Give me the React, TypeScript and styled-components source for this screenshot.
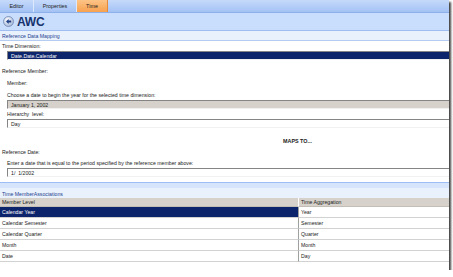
import React from "react";
import styled, { createGlobalStyle } from "styled-components";

const GlobalStyle = createGlobalStyle`
    html, body {
        margin: 0;
        padding: 0;
        background: #ffffff;
    }
    body {
        font-family: "Liberation Sans", Arial, sans-serif;
        font-size: 5.2px;
        color: #1a1a1a;
    }
`;

const Window = styled.div`
    width: 449px;
    height: 270px;
    background: #ffffff;
    box-shadow: 2px 2px 2px rgba(0, 0, 0, 0.75);
    display: flex;
    flex-direction: column;
    overflow: hidden;
`;

const TabBar = styled.div`
    display: flex;
    height: 13px;
    background: linear-gradient(#c6dafb, #a3c2f4);
    border-bottom: 1px solid #8eb0ea;
    box-sizing: border-box;
`;

const Tab = styled.div<{ $active?: boolean; $width: number }>`
    width: ${(p) => p.$width}px;
    display: flex;
    align-items: center;
    justify-content: center;
    font-size: 5.4px;
    color: #222;
    border-right: 1px solid ${(p) => (p.$active ? "#e58a3a" : "#dce9fd")};
    background: ${(p) => (p.$active ? "linear-gradient(#fdc487, #f7a14f)" : "transparent")};
`;

const Header = styled.div`
    height: 18px;
    background: #c9ddfd;
    border-bottom: 1px solid #9fbdf0;
    box-sizing: border-box;
    display: flex;
    align-items: center;
    padding-left: 3px;
    gap: 3px;
`;

const Title = styled.div`
    font-size: 12px;
    font-weight: bold;
    color: #15336e;
    letter-spacing: -0.2px;
`;

const SectionTitle = styled.div`
    height: 10px;
    background: #e9f1fd;
    border-bottom: 1px solid #b4cbf2;
    box-sizing: border-box;
    display: flex;
    align-items: center;
    padding-left: 2px;
    color: #1d3f8f;
    font-size: 5.2px;
`;

const Form = styled.div`
    display: flex;
    flex-direction: column;
`;

const Label = styled.div<{ $indent?: boolean; $h: number }>`
    height: ${(p) => p.$h}px;
    display: flex;
    align-items: flex-end;
    padding-left: ${(p) => (p.$indent ? 7 : 2)}px;
    padding-bottom: 2px;
    box-sizing: border-box;
`;

const Field = styled.div<{ $variant?: "selected" | "gray" | "plain" }>`
    height: 9px;
    margin-left: 7px;
    box-sizing: border-box;
    border-top: 1px solid #858585;
    border-left: 1px solid #858585;
    border-bottom: 1px solid #f1f1f1;
    display: flex;
    align-items: center;
    padding-left: 3px;
    background: ${(p) =>
        p.$variant === "selected" ? "#0b246b" : p.$variant === "gray" ? "#d6d2cb" : "#ffffff"};
    color: ${(p) => (p.$variant === "selected" ? "#ffffff" : "#1a1a1a")};
`;

const MapsTo = styled.div`
    height: 17px;
    display: flex;
    align-items: flex-end;
    padding-left: 283px;
    font-weight: bold;
    font-size: 5.4px;
    padding-bottom: 1px;
    box-sizing: border-box;
`;

const SectionStrip = styled.div`
    margin-top: 5px;
    height: 6px;
    background: #d6e5fc;
    border-top: 1px solid #9dbdf3;
    box-sizing: border-box;
`;

const AssocTitle = styled(SectionTitle)`
    height: 10px;
    border-bottom: none;
    padding-top: 2px;
`;

const Grid = styled.div`
    display: grid;
    grid-template-columns: 299px 1fr;
`;

const HeadCell = styled.div<{ $first?: boolean }>`
    height: 9px;
    background: #d6d2cb;
    display: flex;
    align-items: center;
    padding-left: 2px;
    border-right: ${(p) => (p.$first ? "1px solid #ffffff" : "none")};
    border-bottom: 1px solid #c2beb6;
    box-sizing: border-box;
`;

const Cell = styled.div<{ $selected?: boolean; $first?: boolean }>`
    height: 11px;
    display: flex;
    align-items: center;
    padding-left: 2px;
    box-sizing: border-box;
    border-bottom: 1px solid #d2d2d2;
    border-right: ${(p) => (p.$first ? "1px solid #a0a0a0" : "none")};
    background: ${(p) => (p.$selected ? "#0b246b" : "#ffffff")};
    color: ${(p) => (p.$selected ? "#ffffff" : "#1a1a1a")};
`;

function BackIcon() {
    return (
        <svg width="11" height="11" viewBox="0 0 11 11">
            <defs>
                <radialGradient id="bg" cx="0.4" cy="0.35" r="0.7">
                    <stop offset="0" stopColor="#ffffff" />
                    <stop offset="1" stopColor="#9fb3d6" />
                </radialGradient>
            </defs>
            <circle cx="5.5" cy="5.5" r="5" fill="url(#bg)" stroke="#6f86b3" strokeWidth="0.8" />
            <path d="M3 5.5 L5.6 3 L5.6 4.5 L8.2 4.5 L8.2 6.5 L5.6 6.5 L5.6 8 Z" fill="#1f3f86" />
        </svg>
    );
}

const rows = [
    ["Calendar Year", "Year"],
    ["Calendar Semester", "Semester"],
    ["Calendar Quarter", "Quarter"],
    ["Month", "Month"],
    ["Date", "Day"],
];

export default function App() {
    return (
        <>
            <GlobalStyle />
            <Window>
                <TabBar>
                    <Tab $width={33}>Editor</Tab>
                    <Tab $width={42}>Properties</Tab>
                    <Tab $width={30} $active>
                        Time
                    </Tab>
                </TabBar>
                <Header>
                    <BackIcon />
                    <Title>AWC</Title>
                </Header>
                <SectionTitle>Reference Data Mapping</SectionTitle>
                <Form>
                    <Label $h={10}>Time Dimension:</Label>
                    <Field $variant="selected">Date.Date.Calendar</Field>
                    <Label $h={16}>Reference Member:</Label>
                    <Label $h={12} $indent>
                        Member:
                    </Label>
                    <Label $h={12} $indent>
                        Choose a date to begin the year for the selected time dimension:
                    </Label>
                    <Field $variant="gray">January 1, 2002</Field>
                    <Label $h={10} $indent>
                        Hierarchy&nbsp; level:
                    </Label>
                    <Field>Day</Field>
                    <MapsTo>MAPS TO...</MapsTo>
                    <Label $h={12}>Reference Date:</Label>
                    <Label $h={11} $indent>
                        Enter a date that is equal to the period specified by the reference member above:
                    </Label>
                    <Field>1/ &nbsp;1/2002</Field>
                </Form>
                <SectionStrip />
                <AssocTitle>Time MemberAssociations</AssocTitle>
                <Grid>
                    <HeadCell $first>Member Level</HeadCell>
                    <HeadCell>Time Aggregation</HeadCell>
                    {rows.map(([level, agg], i) => (
                        <React.Fragment key={level}>
                            <Cell $first $selected={i === 0}>
                                {level}
                            </Cell>
                            <Cell>{agg}</Cell>
                        </React.Fragment>
                    ))}
                </Grid>
            </Window>
        </>
    );
}
